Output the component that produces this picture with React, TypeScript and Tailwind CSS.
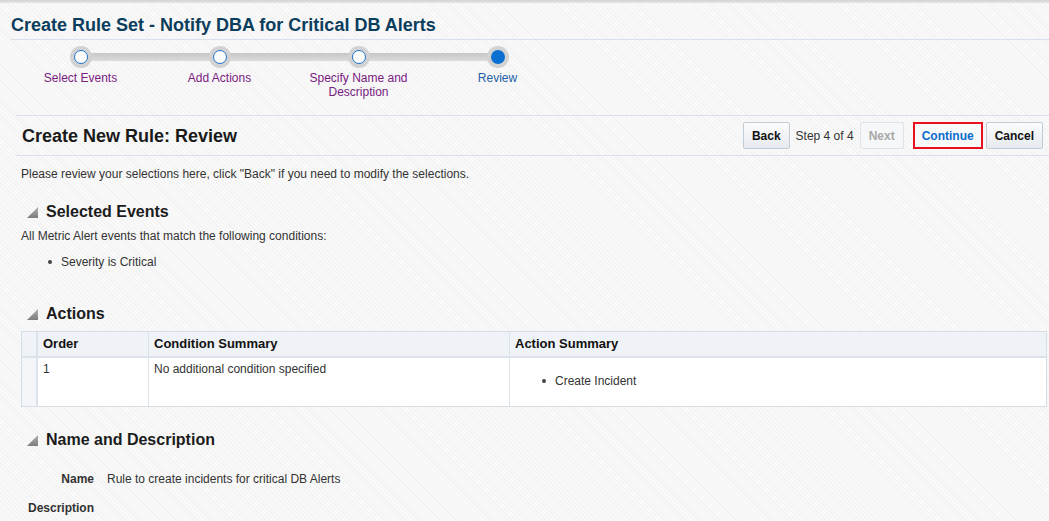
import React from "react";

const steps = [
  { label: "Select Events", done: true },
  { label: "Add Actions", done: true },
  { label: "Specify Name and Description", done: true },
  { label: "Review", done: false },
];

function Triangle() {
  return (
    <svg width="11" height="11" viewBox="0 0 11 11" className="shrink-0">
      <defs>
        <linearGradient id="tri" x1="0" y1="0" x2="0" y2="1">
          <stop offset="0" stopColor="#b0b0b0" />
          <stop offset="1" stopColor="#7c7c7c" />
        </linearGradient>
      </defs>
      <polygon points="11,0 11,11 0,11" fill="url(#tri)" />
    </svg>
  );
}

function SectionHeading({ title }: { title: string }) {
  return (
    <div className="flex items-center gap-[8px] pl-[6px] h-[20px]">
      <Triangle />
      <h2 className="text-[16px] leading-[20px] font-bold text-[#1c1c1c]">{title}</h2>
    </div>
  );
}

function Bullet({ children }: { children: React.ReactNode }) {
  return (
    <div className="flex items-center h-[14px]">
      <span className="w-[4px] h-[4px] rounded-full bg-[#444] ml-[27px] mr-[9px]" />
      <span>{children}</span>
    </div>
  );
}

function Button({ children, disabled }: { children: React.ReactNode; disabled?: boolean }) {
  return (
    <button
      className={
        disabled
          ? "h-[27px] px-[8px] rounded-[2px] border border-[#dde3e8] bg-[#f6f7f8] text-[12px] font-bold text-[#a8a8a8]"
          : "h-[27px] px-[8px] rounded-[2px] border border-[#c2ccd5] bg-gradient-to-b from-[#fbfcfd] to-[#e6eaee] text-[12px] font-bold text-[#111]"
      }
    >
      {children}
    </button>
  );
}

function App() {
  return (
    <div className="w-[1049px] h-[521px] overflow-hidden font-['Liberation_Sans',Arial,sans-serif] text-[#333] bg-[repeating-linear-gradient(45deg,#f9f9f9_0px,#f9f9f9_2px,#f2f2f2_2px,#f2f2f2_3px)]">
      <div className="h-[3px] bg-gradient-to-b from-[#d2d2d2] to-[#e6e6e6]" />

      {/* page title */}
      <div className="ml-[11px] pt-[11px] pb-[3px] border-b border-[#d8e1e9]">
        <h1 className="text-[18px] leading-[22px] font-bold text-[#0b3d5c]">
          Create Rule Set - Notify DBA for Critical DB Alerts
        </h1>
      </div>

      {/* train / stepper */}
      <div className="relative ml-[11px] pt-[6px] flex">
        <div className="absolute left-[69px] top-[13px] w-[417px] h-[8px] bg-gradient-to-b from-[#c6c6c6] to-[#dcdcdc]" />
        {steps.map((s) => (
          <div key={s.label} className="w-[139px] flex flex-col items-center">
            <div className="relative z-10 w-[22px] h-[22px] rounded-full bg-[#d2d2d2] flex items-center justify-center">
              {s.done ? (
                <div className="w-[14px] h-[14px] rounded-full bg-white border-[1.5px] border-[#1f74cf]" />
              ) : (
                <div className="w-[14px] h-[14px] rounded-full bg-[#0a6fd0]" />
              )}
            </div>
            <div
              className={
                s.done
                  ? "mt-[3px] w-[110px] text-center text-[12px] leading-[14px] text-[#79207f]"
                  : "mt-[3px] w-[110px] text-center text-[12px] leading-[14px] text-[#245fa5]"
              }
            >
              {s.label}
            </div>
          </div>
        ))}
      </div>

      {/* sub header */}
      <div className="ml-[16px] mt-[16px] h-[41px] border-t border-b border-[#d8e1e9] flex items-center pl-[6px] pr-[6px]">
        <h2 className="text-[18px] leading-[22px] font-bold text-[#1a1a1a]">Create New Rule: Review</h2>
        <div className="ml-auto flex items-center">
          <Button>Back</Button>
          <span className="ml-[6px] mr-[6px] text-[12px] text-[#333]">Step 4 of 4</span>
          <Button disabled>Next</Button>
          <div className="ml-[9px] border-2 border-[#e8101f] h-[27px] flex items-center">
            <button className="h-[23px] px-[7px] bg-[#f7f9fb] text-[12px] font-bold text-[#0a6ccc]">Continue</button>
          </div>
          <div className="ml-[3px]">
            <Button>Cancel</Button>
          </div>
        </div>
      </div>

      {/* body */}
      <div className="pl-[21px] text-[12px] leading-[14px]">
        <p className="mt-[11px]">Please review your selections here, click "Back" if you need to modify the selections.</p>

        <div className="mt-[21px]">
          <SectionHeading title="Selected Events" />
        </div>
        <p className="mt-[7px]">All Metric Alert events that match the following conditions:</p>
        <div className="mt-[12px]">
          <Bullet>Severity is Critical</Bullet>
        </div>

        <div className="mt-[35px]">
          <SectionHeading title="Actions" />
        </div>
        <div className="mt-[7px] w-[1026px] border border-[#d6dee5] bg-white">
          <div className="flex h-[26px] bg-[#eff2f6] border-b-2 border-[#dbe2e9] text-[13px] font-bold text-[#111]">
            <div className="w-[16px] border-r-2 border-[#dbe2e9]" />
            <div className="w-[111px] pl-[5px] flex items-center border-r border-[#dbe2e9]">Order</div>
            <div className="w-[361px] pl-[5px] flex items-center border-r border-[#dbe2e9]">Condition Summary</div>
            <div className="flex-1 pl-[5px] flex items-center">Action Summary</div>
          </div>
          <div className="flex h-[48px]">
            <div className="w-[16px] border-r-2 border-[#dbe2e9] bg-[#f3f5f8]" />
            <div className="w-[111px] pl-[5px] pt-[4px] border-r border-[#dbe2e9]">1</div>
            <div className="w-[361px] pl-[5px] pt-[4px] border-r border-[#dbe2e9]">No additional condition specified</div>
            <div className="flex-1 pt-[16px]">
              <div className="flex items-center h-[14px]">
                <span className="w-[4px] h-[4px] rounded-full bg-[#444] ml-[32px] mr-[9px]" />
                <span>Create Incident</span>
              </div>
            </div>
          </div>
        </div>

        <div className="mt-[23px]">
          <SectionHeading title="Name and Description" />
        </div>
        <div className="mt-[22px] flex">
          <span className="w-[73px] text-right font-bold text-[#333]">Name</span>
          <span className="ml-[13px]">Rule to create incidents for critical DB Alerts</span>
        </div>
        <div className="mt-[15px] flex">
          <span className="w-[73px] text-right font-bold text-[#333]">Description</span>
        </div>
      </div>
    </div>
  );
}

export default App;
